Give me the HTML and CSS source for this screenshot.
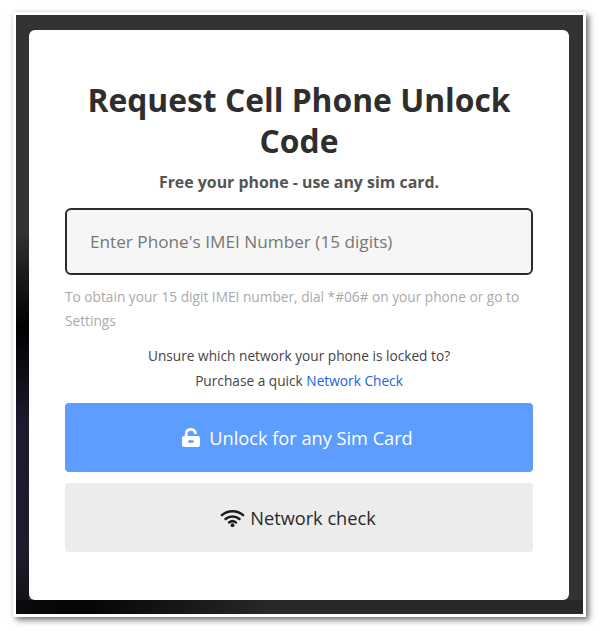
FILE: index.html
```html
<!DOCTYPE html>
<html lang="en">
<head>
    <meta charset="UTF-8">
    <title>Request Cell Phone Unlock Code</title>
    <link rel="stylesheet" href="styles.css">
</head>
<body>
    <div class="frame">
        <div class="backdrop">
            <div class="card">
                <h1>Request Cell Phone Unlock Code</h1>
                <p class="subtitle">Free your phone - use any sim card.</p>
                <input class="imei" type="text" placeholder="Enter Phone's IMEI Number (15 digits)">
                <p class="hint">To obtain your 15 digit IMEI number, dial *#06# on your phone or go to Settings</p>
                <p class="unsure">Unsure which network your phone is locked to?</p>
                <p class="unsure">Purchase a quick <a href="#">Network Check</a></p>
                <button class="btn btn-unlock">
                    <svg class="icon-lock" xmlns="http://www.w3.org/2000/svg" viewBox="0 0 18 19">
                        <path d="M4.2 8.5V5.6C4.2 3 6.1 1.4 8.8 1.4c2.4 0 4.1 1.3 4.6 3.5" fill="none" stroke="#fff" stroke-width="2.8" stroke-linecap="round"/>
                        <path fill-rule="evenodd" d="M2 8h14c1.1 0 2 .9 2 2v7c0 1.1-.9 2-2 2H2c-1.1 0-2-.9-2-2v-7c0-1.100.9-2 2-2zm5.500 4.200c-.8 0-1.400.6-1.400 1.300s.6 1.300 1.400 1.300h3c.8 0 1.400-.6 1.400-1.300s-.6-1.300-1.400-1.300h-3z"/>
                    </svg>
                    Unlock for any Sim Card
                </button>
                <button class="btn btn-network">
                    <svg class="icon-wifi" xmlns="http://www.w3.org/2000/svg" viewBox="0 0 24 18">
                        <path d="M1.4 6.2C7.2.8 16.8.8 22.6 6.2M5 10c4-3.500 10-3.500 14 0M8.600 13.400c2-1.500 4.800-1.500 6.800 0" fill="none" stroke="#1c1c1c" stroke-width="2.500" stroke-linecap="round"/>
                        <circle cx="12" cy="16.200" r="1.900" fill="#1c1c1c"/>
                    </svg>
                    Network check
                </button>
            </div>
        </div>
    </div>
</body>
</html>
```

FILE: styles.css
```css
/* Pagina */
* {
    box-sizing: border-box;
    margin: 0;
    padding: 0;
}

body {
    font-family: "Open Sans", Arial, sans-serif;
    background-color: #fff;
    color: #333;
    padding: 12px 14px 13px 13px;
}

/* Marco de la captura */
.frame {
    background-color: #fff;
    padding: 3px;
    box-shadow: 3px 3px 6px rgba(0, 0, 0, 0.55), 0 0 4px rgba(0, 0, 0, 0.08);
}

.backdrop {
    padding: 15px 14px 14px 13px;
    background-color: #333;
    background-image:
        linear-gradient(90deg, #0a0a0c 0, #050505 12%, #26282a 45%, #26282a 100%),
        linear-gradient(180deg, #333 0, #333 36%, #000 52%, #1c1a2e 68%, #1d1b2c 90%, #111 100%);
    background-size: 100% 14px, 13px 100%;
    background-position: left bottom, left top;
    background-repeat: no-repeat;
}

/* Tarjeta */
.card {
    background-color: #fff;
    border-radius: 6px;
    padding: 49px 36px 48px;
    text-align: center;
}

h1 {
    font-size: 31.8px;
    font-weight: 700;
    line-height: 41px;
    color: #2e2e2e;
    margin-bottom: 9px;
}

.subtitle {
    font-size: 15.9px;
    font-weight: 700;
    line-height: 24px;
    color: #555;
    margin-bottom: 14px;
}

.imei {
    display: block;
    width: 100%;
    height: 67px;
    padding: 0 23px;
    border: 2px solid #2b2b2b;
    border-radius: 6px;
    background-color: #f6f6f6;
    font-family: inherit;
    font-size: 17.2px;
    color: #333;
}

.imei::placeholder {
    color: #777;
    opacity: 1;
}

.hint {
    font-size: 13.7px;
    line-height: 24px;
    color: #aaa;
    text-align: left;
    margin: 10px 0 10px;
}

.unsure {
    font-size: 13.7px;
    line-height: 25px;
    color: #444;
}

.unsure a {
    color: #1a62e8;
    text-decoration: none;
}

/* Botones */
.btn {
    display: flex;
    align-items: center;
    justify-content: center;
    width: 100%;
    height: 69px;
    border: none;
    border-radius: 4px;
    font-family: inherit;
    font-size: 18.2px;
    cursor: pointer;
}

.btn-unlock {
    background-color: #5c9dff;
    color: #fff;
    margin-top: 10px;
    padding-right: 3px;
}

.btn-network {
    background-color: #ececec;
    color: #2a2a2a;
    margin-top: 11px;
    padding-right: 2px;
}

.icon-lock {
    width: 18px;
    height: 19px;
    fill: #fff;
    margin-right: 9px;
}

.icon-wifi {
    width: 25px;
    height: 18px;
    margin-right: 5px;
}
```
